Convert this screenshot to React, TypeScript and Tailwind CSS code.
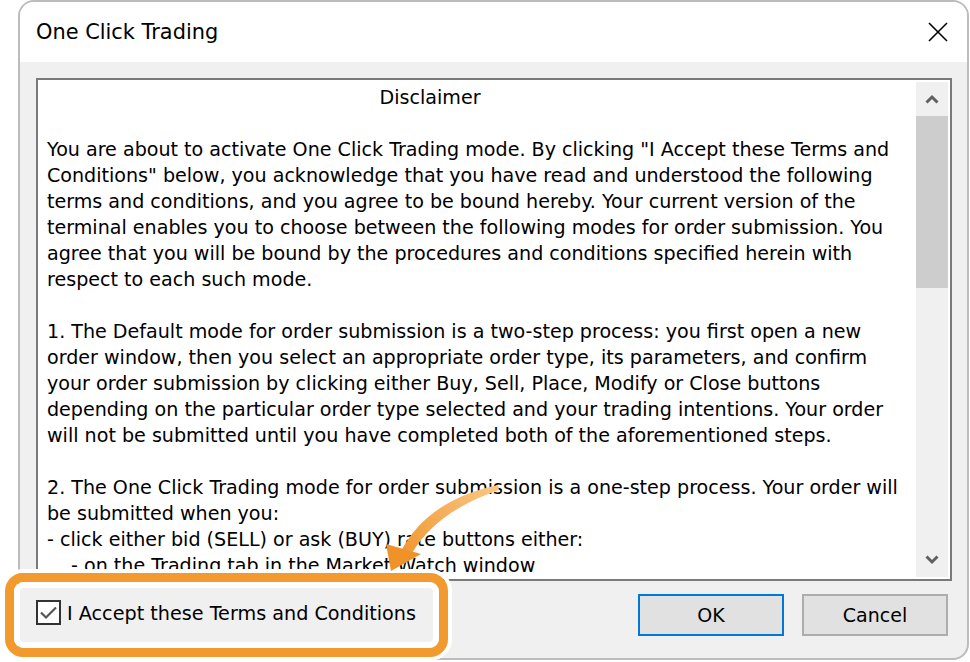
import React from "react";

const lines: string[] = [
  "You are about to activate One Click Trading mode. By clicking \"I Accept these Terms and",
  "Conditions\" below, you acknowledge that you have read and understood the following",
  "terms and conditions, and you agree to be bound hereby. Your current version of the",
  "terminal enables you to choose between the following modes for order submission. You",
  "agree that you will be bound by the procedures and conditions specified herein with",
  "respect to each such mode.",
  "",
  "1. The Default mode for order submission is a two-step process: you first open a new",
  "order window, then you select an appropriate order type, its parameters, and confirm",
  "your order submission by clicking either Buy, Sell, Place, Modify or Close buttons",
  "depending on the particular order type selected and your trading intentions. Your order",
  "will not be submitted until you have completed both of the aforementioned steps.",
  "",
  "2. The One Click Trading mode for order submission is a one-step process. Your order will",
  "be submitted when you:",
  "- click either bid (SELL) or ask (BUY) rate buttons either:",
];

export default function App() {
  return (
    <div className="relative w-[970px] h-[662px] bg-white overflow-hidden font-['DejaVu_Sans',sans-serif] text-black">
      <div className="ml-[18px] w-[951px] h-[660px] border-2 border-[#bcbcbc] rounded-[16px] overflow-hidden flex flex-col bg-[#f0f0f0]">
        <div className="h-[60px] shrink-0 bg-white flex items-center justify-between pl-4 pr-[19px]">
          <span className="text-[20.9px] leading-none">One Click Trading</span>
          <svg width="20" height="20" viewBox="0 0 20 20">
            <path d="M1 1 L19 19 M19 1 L1 19" stroke="#000" strokeWidth="1.6" fill="none" />
          </svg>
        </div>
        <div className="flex-1 flex flex-col pl-4 pr-[15px] pt-4">
          <div className="h-[503px] shrink-0 border-2 border-[#7a7a7a] bg-white flex overflow-hidden">
            <div className="flex-1 pl-[9px] pt-[5px] text-[19.1px] leading-[26px] overflow-hidden whitespace-pre">
              <div className="w-[766px] text-center">Disclaimer</div>
              <div className="h-[26px]" />
              {lines.map((l, i) => (
                <div key={i} className="h-[26px]">{l}</div>
              ))}
              <div className="h-[26px] pl-[24px]">- on the Trading tab in the Market Watch window</div>
            </div>
            <div className="w-[32px] my-[2px] mr-[2px] bg-[#f0f0f0] flex flex-col">
              <div className="h-[34px] flex items-center justify-center">
                <svg width="14" height="10" viewBox="0 0 14 10">
                  <path d="M1.5 8.5 L7 3 L12.5 8.5" stroke="#606060" strokeWidth="3" fill="none" />
                </svg>
              </div>
              <div className="h-[172px] bg-[#cdcdcd]" />
              <div className="flex-1" />
              <div className="h-[34px] flex items-center justify-center">
                <svg width="14" height="10" viewBox="0 0 14 10">
                  <path d="M1.5 1.5 L7 7 L12.5 1.5" stroke="#606060" strokeWidth="3" fill="none" />
                </svg>
              </div>
            </div>
          </div>
          <div className="mt-[13px] h-[42px] flex items-center pr-[4px]">
            <div className="w-[25px] h-[25px] -mt-[5px] border-2 border-[#333333] bg-white flex items-center justify-center">
              <svg width="19" height="15" viewBox="0 0 19 15">
                <path d="M2 7.5 L7 12.5 L17 2.5" stroke="#555555" strokeWidth="2.2" fill="none" />
              </svg>
            </div>
            <span className="ml-[6px] text-[19.2px] -mt-[2px]">I Accept these Terms and Conditions</span>
            <div className="ml-auto w-[146px] h-[42px] border-2 border-[#0078d7] bg-[#e1e1e1] flex items-center justify-center text-[19px]">
              OK
            </div>
            <div className="ml-[18px] w-[146px] h-[42px] border-2 border-[#adadad] bg-[#e1e1e1] flex items-center justify-center text-[19px]">
              Cancel
            </div>
          </div>
        </div>
      </div>

      <div className="absolute left-[1px] top-[569px] w-[451px] h-[92px] rounded-[22px] border-4 border-white">
        <div className="h-full rounded-[18px] border-[9px] border-[#f29a2e]">
          <div className="h-full rounded-[10px] border-[6px] border-white" />
        </div>
      </div>

      <svg className="absolute left-0 top-0 pointer-events-none" width="970" height="662" viewBox="0 0 970 662">
        <defs>
          <linearGradient id="ag" x1="498" y1="487" x2="395" y2="565" gradientUnits="userSpaceOnUse">
            <stop offset="0" stopColor="#f9c885" />
            <stop offset="1" stopColor="#f0922a" />
          </linearGradient>
        </defs>
        <path d="M498 485 Q428 500 401 551 L412 553 Q437 511 499 490 Z" fill="url(#ag)" />
        <path d="M386 544 L421 554 L391 571 Z" fill="#f0922a" />
      </svg>
    </div>
  );
}
